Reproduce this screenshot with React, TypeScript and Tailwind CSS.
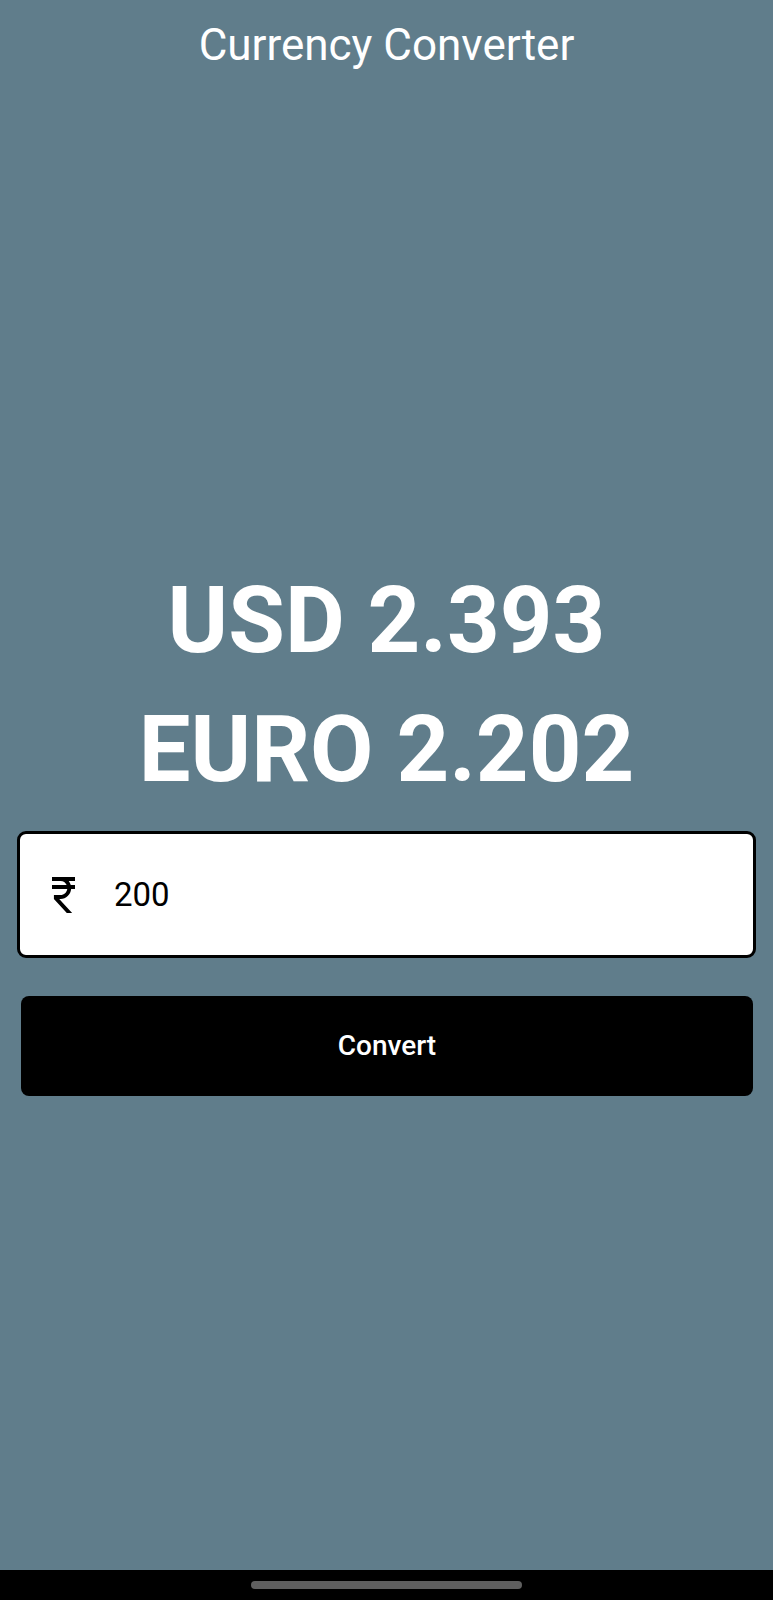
import { useState } from "react";

// ₹ drawn from the material "currency_rupee" shape
function RupeeIcon() {
	return (
		<svg
			width="23"
			height="36"
			viewBox="6 3 12 18"
			preserveAspectRatio="none"
			fill="currentColor"
		>
			<path d="M13.66 7c-.56-1.18-1.76-2-3.16-2H6V3h12v2h-3.26c.48.58.84 1.26 1.05 2H18v2h-2.02c-.25 2.8-2.61 5-5.48 5h-.73l6.73 7h-2.77L7 14v-2h3.5c1.76 0 3.22-1.3 3.46-3H6V7h7.66z" />
		</svg>
	);
}

export default function App() {
	const [amount, setAmount] = useState("200");
	const [rates] = useState({ usd: "2.393", euro: "2.202" });

	return (
		<div className="flex h-[1600px] flex-col bg-[#607d8b] font-['Roboto','Liberation_Sans',sans-serif]">
			{/* Title */}
			<header className="pt-[22px] text-center text-[44px] leading-[46px] text-white">
				Currency Converter
			</header>

			<main className="flex flex-1 flex-col">
				{/* Results */}
				<div className="mt-[488px] text-center text-[92px] font-bold leading-[129px] text-white">
					<p>USD {rates.usd}</p>
					<p>EURO {rates.euro}</p>
				</div>

				{/* Amount input */}
				<div className="mx-[17px] mt-[17px] flex h-[127px] items-center rounded-[9px] border-[3px] border-black bg-white pl-[32px]">
					<span className="text-black">
						<RupeeIcon />
					</span>
					<input
						className="ml-[39px] flex-1 bg-transparent text-[33px] text-black outline-none"
						value={amount}
						onChange={(e) => setAmount(e.target.value)}
					/>
				</div>

				{/* Convert button */}
				<button className="mt-[38px] ml-[21px] mr-[20px] h-[100px] rounded-[8px] bg-black text-[28px] font-medium text-white">
					Convert
				</button>
			</main>

			{/* System navigation bar */}
			<div className="flex h-[30px] items-center justify-center bg-black">
				<div className="h-2 w-[271px] rounded-full bg-[#5f5f5f]" />
			</div>
		</div>
	);
}
